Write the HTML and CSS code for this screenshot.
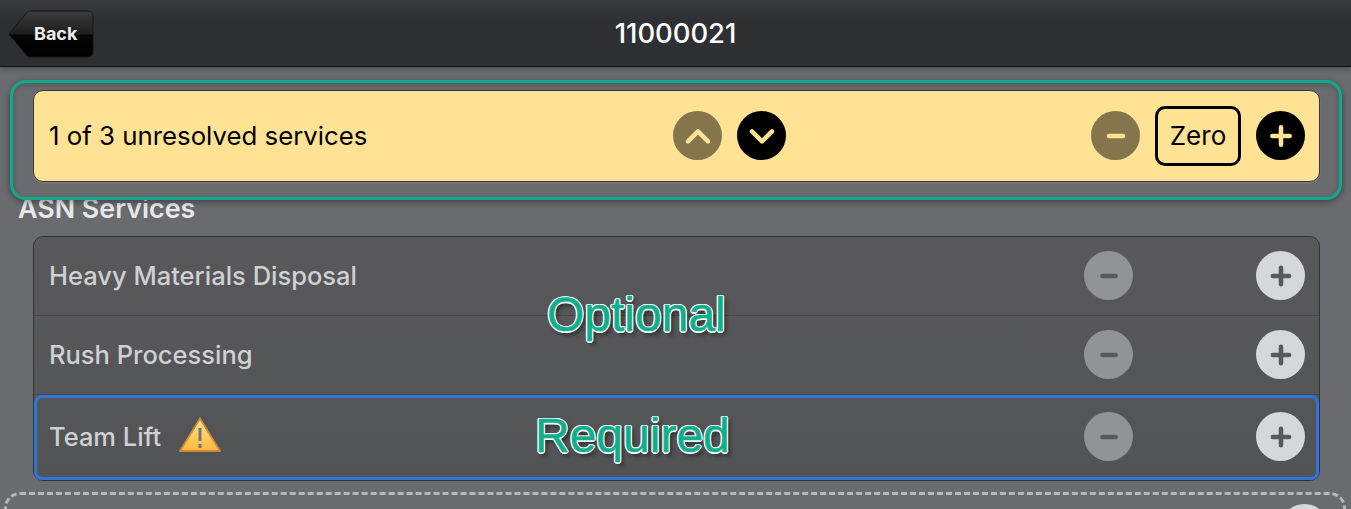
FILE: index.html
```html
<!DOCTYPE html>
<html lang="en">
<head>
<meta charset="utf-8">
<title>11000021</title>
<link rel="stylesheet" href="styles.css">
</head>
<body>
<header class="topbar">
  <a class="back"><svg class="back-shape" width="86" height="48" viewBox="0 0 86 48"><defs><linearGradient id="bk" x1="0" y1="0" x2="0" y2="1"><stop offset="0" stop-color="#3c3c3c"/><stop offset=".5" stop-color="#1e1e1e"/><stop offset=".52" stop-color="#050505"/><stop offset="1" stop-color="#000"/></linearGradient></defs><path d="M22 1H80a5 5 0 0 1 5 5V42a5 5 0 0 1-5 5H22a4 4 0 0 1-2.800-1.200L2 25.500a2 2 0 0 1 0-3L19.200 2.200A4 4 0 0 1 22 1Z" fill="url(#bk)" stroke="#151515"/></svg><span class="back-label">Back</span></a>
  <h1 class="title">11000021</h1>
</header>
<main class="content">
  <section class="status">
    <span class="status-text">1 of 3 unresolved services</span>
    <div class="nav-group">
      <button class="circle dark faded"><svg class="ico" viewBox="0 0 24 24"><path d="M4.500 16 12 8.500l7.500 7.500" class="glyph-y"/></svg></button>
      <button class="circle dark"><svg class="ico" viewBox="0 0 24 24"><path d="M4.500 8.500 12 16l7.500-7.500" class="glyph-y"/></svg></button>
    </div>
    <div class="qty-group">
      <button class="circle dark faded"><svg class="ico" viewBox="0 0 24 24"><path d="M6.700 12h10.600" class="glyph-y"/></svg></button>
      <span class="zero">Zero</span>
      <button class="circle dark"><svg class="ico" viewBox="0 0 24 24"><path d="M12 5.500v13M5.500 12h13" class="glyph-y"/></svg></button>
    </div>
  </section>
  <h2 class="section-title">ASN Services</h2>
  <ul class="services">
    <li class="service">
      <span class="service-name">Heavy Materials Disposal</span>
      <div class="service-qty">
        <button class="circle light faded"><svg class="ico" viewBox="0 0 24 24"><path d="M7 12h10" class="glyph-g"/></svg></button>
        <button class="circle light"><svg class="ico" viewBox="0 0 24 24"><path d="M12 5.900v12.200M5.900 12h12.200" class="glyph-g"/></svg></button>
      </div>
    </li>
    <li class="service">
      <span class="service-name">Rush Processing</span>
      <div class="service-qty">
        <button class="circle light faded"><svg class="ico" viewBox="0 0 24 24"><path d="M7 12h10" class="glyph-g"/></svg></button>
        <button class="circle light"><svg class="ico" viewBox="0 0 24 24"><path d="M12 5.900v12.200M5.900 12h12.200" class="glyph-g"/></svg></button>
      </div>
    </li>
    <li class="service required">
      <span class="service-name">Team Lift</span>
      <svg class="warn" width="44" height="38" viewBox="0 0 44 38"><defs><linearGradient id="wg" x1="0" y1="0" x2="0" y2="1"><stop offset="0" stop-color="#ffe48a"/><stop offset="1" stop-color="#ffb93e"/></linearGradient></defs><path d="M22 2.500 42 35H2Z" fill="url(#wg)" stroke="#c98a3c" stroke-width="1.800" stroke-linejoin="round"/><path d="M22 12v13" stroke="#6d7480" stroke-width="3"/><path d="M22 28v4" stroke="#6d7480" stroke-width="3"/></svg>
      <div class="service-qty">
        <button class="circle light faded"><svg class="ico" viewBox="0 0 24 24"><path d="M7 12h10" class="glyph-g"/></svg></button>
        <button class="circle light"><svg class="ico" viewBox="0 0 24 24"><path d="M12 5.900v12.200M5.900 12h12.200" class="glyph-g"/></svg></button>
      </div>
    </li>
  </ul>
  <section class="dropzone"><span class="circle light"></span></section>
</main>
<div class="callout"></div>
<span class="note note-optional">Optional</span>
<span class="note note-required">Required</span>
</body>
</html>
```
FILE: styles.css
```css
* { box-sizing: border-box; }
html, body { margin: 0; height: 509px; overflow: hidden; }
body { position: relative; font-family: Inter, "Liberation Sans", sans-serif; background: #6a6b6e; color: #000; }
.topbar { height: 67px; background: linear-gradient(#3a3b3e, #2f3033 30%, #2e2f32); border-bottom: 1px solid #111; position: relative; display: flex; align-items: center; justify-content: center; box-shadow: 0 2px 5px rgba(0,0,0,.25); }
.back { position: absolute; left: 8px; top: 9.500px; width: 86px; height: 48px; display: block; }
.back-shape { display: block; }
.back-label { position: absolute; left: 26px; top: 13px; font-size: 18px; line-height: 21px; font-weight: 700; color: #eee; }
.title { margin: 0; font-size: 27.400px; font-weight: 500; color: #fff; line-height: 30px; }
.content { height: 442px; padding: 23px 31px 0 33px; }
.status { height: 92px; background: #ffe294; border: 1px solid #333; border-radius: 10px; display: flex; align-items: center; padding: 0 14px 1px 15px; box-shadow: 0 1px 2px rgba(255,255,255,.15); }
.status-text { font-size: 25.800px; width: 624px; }
.nav-group { display: flex; gap: 15px; }
.qty-group { display: flex; gap: 15px; align-items: center; margin-left: auto; }
.circle { width: 49px; height: 49px; border-radius: 50%; border: 0; padding: 0; display: inline-flex; align-items: center; justify-content: center; flex: none; }
.dark { background: #000; }
.dark.faded { background: #84754d; }
.light { background: #d6d7d9; }
.light.faded { background: #929394; }
.ico { width: 32px; height: 32px; fill: none; stroke-linecap: round; stroke-linejoin: round; }
.glyph-y { stroke: #ffe294; stroke-width: 3.400; }
.glyph-g { stroke: #58595c; stroke-width: 3.400; }
.zero { width: 86px; height: 60px; border: 3px solid #000; border-radius: 10px; display: flex; align-items: center; justify-content: center; font-size: 26px; }
.section-title { margin: 10px 0 0 -15px; font-size: 26.850px; line-height: 32px; font-weight: 600; color: #e7e8ea; }
.services { list-style: none; margin: 12px 0 0; padding: 0; background: linear-gradient(#59595b, #525355); border: 1px solid #333; border-radius: 10px; }
.service { height: 79px; display: flex; align-items: center; padding: 0 14px 1px 15px; border-bottom: 1px solid #46474a; }
.service.required { height: 85px; border: 3px solid #2e74dc; border-radius: 8px; padding: 0 11px 2px 12px; }
.service-name { font-size: 25.500px; color: #cfd0d3; font-weight: 500; }
.service-qty { margin-left: auto; display: flex; gap: 123px; }
.warn { margin: 0 0 3px 17px; }
.dropzone { margin: 11px -26px 0 -29px; height: 60px; padding: 9px 14px 0 0; display: flex; justify-content: flex-end; border: 3px dashed #b6b7b9; border-radius: 16px; }
.callout { position: absolute; left: 10px; top: 80px; width: 1332px; height: 120px; border: 3px solid #0dab8d; border-radius: 16px; box-shadow: 0 2px 6px rgba(0,0,0,.4), inset 0 2px 6px rgba(0,0,0,.2); }
.note { position: absolute; font-family: "Liberation Sans", sans-serif; font-size: 48px; line-height: 56px; color: #0fae8d; -webkit-text-stroke: .5px #0fae8d; text-shadow: -1.500px 0 #fff, 1.500px 0 #fff, 0 -1.500px #fff, 0 1.500px #fff, -1px -1px #fff, 1px 1px #fff, -1px 1px #fff, 1px -1px #fff, 3px 4px 4px rgba(0,0,0,.5); }
.note-optional { left: 547px; top: 287px; }
.note-required { left: 535px; top: 408px; }
```
